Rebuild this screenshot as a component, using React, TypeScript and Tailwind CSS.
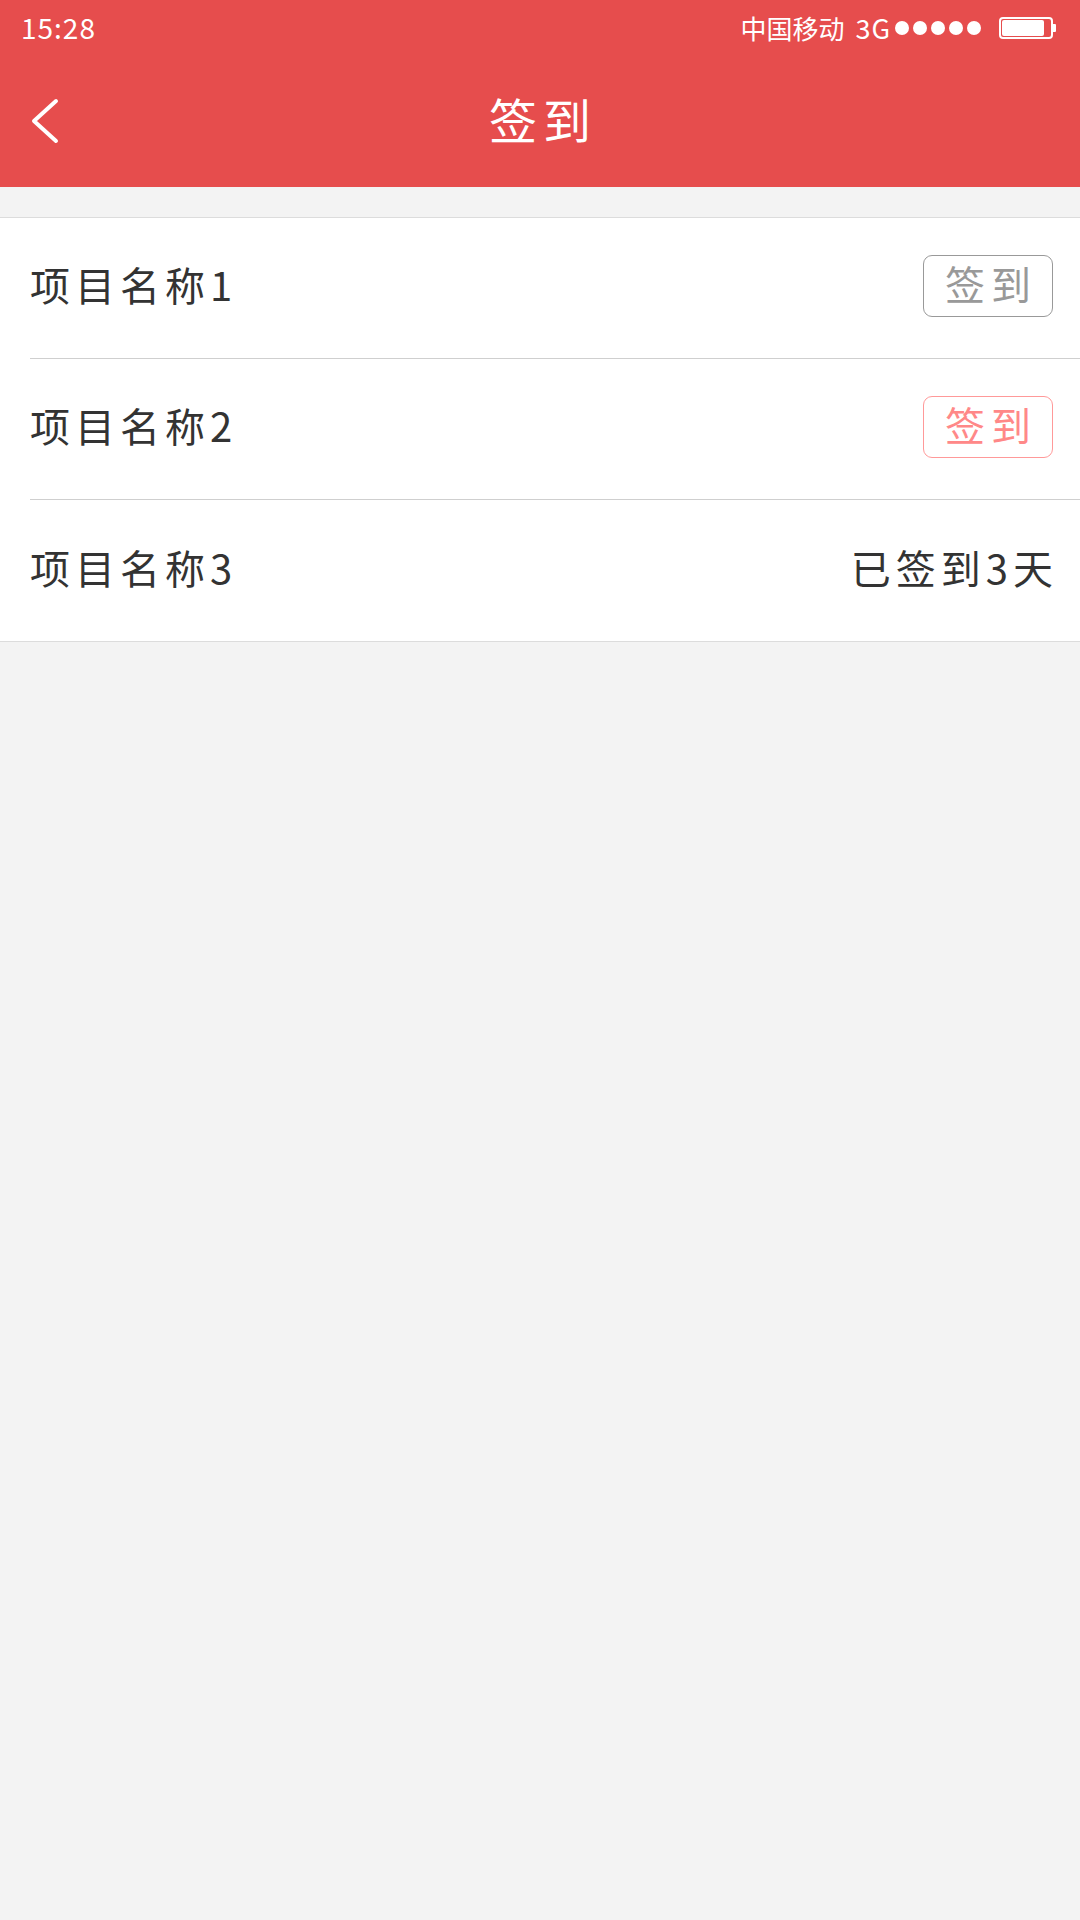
import React from 'react';

const font = { fontFamily: '"Noto Sans CJK SC", "Noto Sans", sans-serif' };

const StatusBar = () => (
    <div className="h-[55px] flex items-center justify-between pl-[21px] pr-[24px] text-white">
        <span className="text-[28px] leading-none tracking-[1px] mb-[2px]">15:28</span>
        <div className="flex items-center">
            <span className="text-[26px] leading-none">中国移动</span>
            <span className="text-[27px] leading-none ml-[11px] tracking-[1px]">3G</span>
            <div className="flex items-center gap-[4px] ml-[4px]">
                <span className="w-[14px] h-[14px] rounded-full bg-white" />
                <span className="w-[14px] h-[14px] rounded-full bg-white" />
                <span className="w-[14px] h-[14px] rounded-full bg-white" />
                <span className="w-[14px] h-[14px] rounded-full bg-white" />
                <span className="w-[14px] h-[14px] rounded-full bg-white" />
            </div>
            <div className="flex items-center ml-[18px]">
                <div className="w-[54px] h-[22px] border-[2px] border-white rounded-[4px] p-[1px]">
                    <div className="w-[42px] h-full bg-white rounded-[2px]" />
                </div>
                <div className="w-[3px] h-[8px] bg-white rounded-r-[1px]" />
            </div>
        </div>
    </div>
);

const Header = () => (
    <div className="h-[132px] grid grid-cols-[1fr_auto_1fr] items-center">
        <div className="pl-[31px]">
            <svg width="28" height="46" viewBox="0 0 28 46" fill="none">
                <path d="M25 3 L3 23 L25 43" stroke="white" strokeWidth="4" strokeLinecap="round" strokeLinejoin="round" />
            </svg>
        </div>
        <h1 className="text-white text-[48px] leading-none tracking-[6px] pl-[6px] mb-[6px]">签到</h1>
        <div />
    </div>
);

type Item = { name: string; status: 'todo' | 'active' | 'done'; days?: number };

const items: Item[] = [
    { name: '项目名称1', status: 'todo' },
    { name: '项目名称2', status: 'active' },
    { name: '项目名称3', status: 'done', days: 3 },
];

const Row = ({ item, last }: { item: Item; last: boolean }) => (
    <div className="pl-[30px]">
        <div className={`h-[141px] flex items-center justify-between pr-[27px] ${last ? '' : 'border-b border-[#cfcfcf]'}`}>
            <span className="text-[40px] tracking-[5px] text-[#333] leading-none mb-[8px]">{item.name}</span>
            {item.status === 'todo' && (
                <button className="w-[130px] h-[62px] mb-[5px] border border-[#999] rounded-[9px] text-[#999] text-[40px] leading-none tracking-[6px] pl-[6px] pb-[5px] flex items-center justify-center">
                    签到
                </button>
            )}
            {item.status === 'active' && (
                <button className="w-[130px] h-[62px] mb-[5px] border border-[#f99] rounded-[9px] text-[#f88] text-[40px] leading-none tracking-[6px] pl-[6px] pb-[5px] flex items-center justify-center">
                    签到
                </button>
            )}
            {item.status === 'done' && (
                <span className="text-[40px] tracking-[5px] text-[#333] leading-none mr-[-5px] mb-[8px]">已签到{item.days}天</span>
            )}
        </div>
    </div>
);

const App = () => {
    return (
        <div className="w-[1080px] min-h-[1920px] bg-[#f3f3f3]" style={font}>
            <div className="bg-[#e64d4d]">
                <StatusBar />
                <Header />
            </div>
            <div className="mt-[30px] bg-white border-t border-b border-[#dcdcdc]">
                {items.map((item, i) => (
                    <Row key={item.name} item={item} last={i === items.length - 1} />
                ))}
            </div>
        </div>
    );
};

export default App;
